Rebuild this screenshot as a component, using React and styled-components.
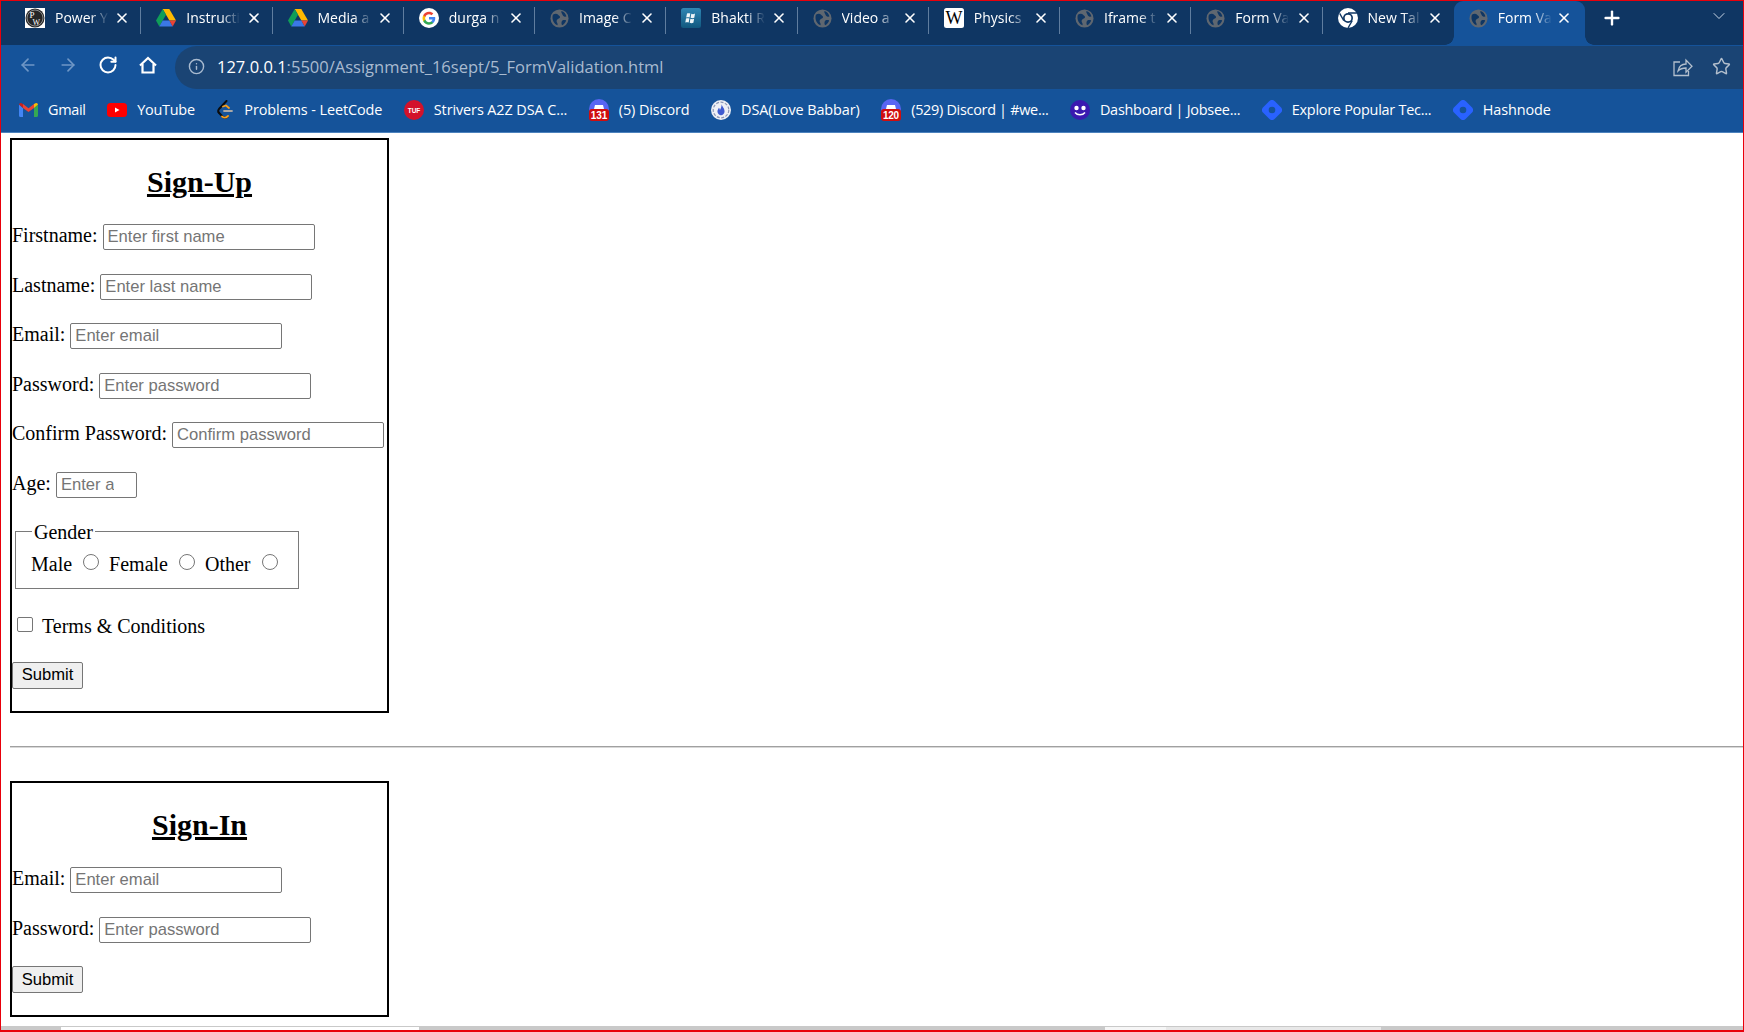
import React from "react";
import styled, { createGlobalStyle } from "styled-components";
import { X, Plus, ChevronDown, ArrowLeft, ArrowRight, RotateCw, Info, Star } from "lucide-react";

const GlobalStyle = createGlobalStyle`
  html, body {
    margin: 0;
    padding: 0;
    background: #fff;
  }
  #root {
    height: 1032px;
  }
`;

const Frame = styled.div`
  box-sizing: border-box;
  width: 1744px;
  height: 1032px;
  display: flex;
  flex-direction: column;
  border: 1px solid #e8000b;
  border-bottom-width: 2px;
  overflow: hidden;
`;

const TabStrip = styled.div`
  height: 44px;
  background: #0f3663;
  display: flex;
  padding-left: 9px;
  font-family: "Open Sans", "Noto Sans", sans-serif;
  flex: none;
`;

const Tab = styled.div`
  position: relative;
  box-sizing: border-box;
  width: 131.25px;
  height: 44px;
  display: flex;
  align-items: center;
  padding: 0 ${(p) => (p.$active ? 13 : 11)}px 10px 15px;
  color: #fff;
  font-size: 14px;
  background: ${(p) => (p.$active ? "#15539a" : "transparent")};
  border-radius: ${(p) => (p.$active ? "9px 9px 0 0" : "0")};

  &::after {
    content: "";
    display: ${(p) => (p.$sep ? "block" : "none")};
    position: absolute;
    right: 0;
    top: 6px;
    height: 27px;
    width: 1px;
    background: #5f7d9f;
  }
`;

// concave corners either side of the selected tab
const TabCorner = styled.span`
  position: absolute;
  bottom: 0;
  width: 9px;
  height: 9px;
  ${(p) => (p.$right ? "right: -9px;" : "left: -9px;")}
  background: radial-gradient(
    circle at ${(p) => (p.$right ? "100% 0" : "0 0")},
    #0f3663 8.5px,
    #15539a 9px
  );
`;

const TabTitle = styled.span`
  width: 54px;
  margin: -2px 0 0 10px;
  white-space: nowrap;
  overflow: hidden;
  -webkit-mask-image: linear-gradient(90deg, #000 65%, transparent 100%);
  mask-image: linear-gradient(90deg, #000 65%, transparent 100%);
`;

const TabClose = styled(X)`
  margin-left: auto;
  flex: none;
`;

const NewTab = styled.div`
  display: flex;
  align-items: center;
  color: #fff;
  padding: 0 0 10px 16px;
`;

const TabMenu = styled.div`
  margin-left: auto;
  padding: 0 14px 14px 0;
  display: flex;
  align-items: center;
  color: #c9d6e6;
`;

const Toolbar = styled.div`
  height: 44px;
  background: #15539a;
  display: flex;
  align-items: flex-start;
  padding-left: 17px;
  flex: none;
`;

const NavIcons = styled.div`
  display: flex;
  gap: 20px;
  padding-top: 10px;
  width: 157px;
  flex: none;
`;

const NavIcon = styled.span`
  display: flex;
  color: ${(p) => (p.$off ? "#6f97c6" : "#fff")};
`;

const Omnibox = styled.div`
  flex: 1;
  box-sizing: border-box;
  height: 43px;
  margin-top: 1px;
  background: #1a4474;
  border-radius: 22px 0 0 22px;
  display: flex;
  align-items: center;
  padding: 0 0 2px 13px;
  font-family: "Open Sans", "Noto Sans", sans-serif;
  font-size: 16.5px;
  color: #a9bbd0;
`;

const Url = styled.span`
  margin-left: 12px;
  white-space: nowrap;

  b {
    font-weight: 400;
    color: #fff;
  }
`;

const OmniActions = styled.div`
  margin-left: auto;
  display: flex;
  gap: 19px;
  padding-right: 12px;
  color: #b3bfcd;
`;

const Bookmarks = styled.div`
  height: 44px;
  background: #15539a;
  border-bottom: 1px solid #4c82bd;
  box-sizing: border-box;
  display: flex;
  align-items: center;
  padding: 0 0 2px 18px;
  font-family: "Open Sans", "Noto Sans", sans-serif;
  font-size: 14.45px;
  color: #fff;
  flex: none;
`;

const Bookmark = styled.div`
  display: flex;
  align-items: center;
  gap: 10px;
  margin-right: 21.5px;
  white-space: nowrap;
  letter-spacing: ${(p) => p.$track || -0.1}px;
`;

const Page = styled.div`
  flex: 1;
  min-height: 0;
  display: flex;
  flex-direction: column;
  padding: 5px 0 0 9px;
  font-family: "Liberation Serif", serif;
  font-size: 20px;
  color: #000;
`;

const FormBox = styled.form`
  box-sizing: border-box;
  width: 379px;
  height: ${(p) => p.$height}px;
  border: 2px solid #000;
  flex: none;
`;

const Heading = styled.h2`
  margin: 25px 0 25px;
  text-align: center;
  font-size: 30px;
  line-height: 34px;
  font-weight: 700;
  text-decoration: underline;
`;

const Row = styled.div`
  height: 49.6px;
  white-space: nowrap;
`;

const Field = styled.input`
  box-sizing: border-box;
  width: ${(p) => p.$width || 212}px;
  height: 26px;
  margin: 0;
  padding: 0 ${(p) => p.$clip || 4}px 0 4px;
  border: 1px solid #767676;
  border-radius: 2px;
  font-family: "Liberation Sans", sans-serif;
  font-size: 16.6px;
  vertical-align: baseline;

  &::placeholder {
    color: #757575;
    opacity: 1;
  }
`;

const GenderSet = styled.fieldset`
  box-sizing: border-box;
  width: 284px;
  height: 68px;
  margin: -1px 0 0 3px;
  padding: 0 0 0 15px;
  border: 1.5px solid #7a7a7a;
  line-height: 22px;

  legend {
    padding: 0 2px;
    margin-left: 1px;
  }
`;

const GenderRow = styled.div`
  display: flex;
  align-items: center;
  height: 30px;
  margin-top: 6px;
`;

const Radio = styled.input.attrs({ type: "radio" })`
  appearance: none;
  box-sizing: border-box;
  width: 16px;
  height: 16px;
  border: 1px solid #767676;
  border-radius: 50%;
  margin: -3px 10px 0 11px;
  flex: none;
`;

const TermsRow = styled.div`
  display: flex;
  align-items: center;
  height: 40px;
  margin: 18px 0 15px 5px;
`;

const Check = styled.input.attrs({ type: "checkbox" })`
  appearance: none;
  box-sizing: border-box;
  width: 16px;
  height: 15px;
  border: 1px solid #767676;
  border-radius: 2px;
  margin: -4px 9px 0 0;
  flex: none;
`;

const SubmitButton = styled.button`
  box-sizing: border-box;
  display: block;
  width: 71px;
  height: 27px;
  padding: 0;
  background: #efefef;
  border: 1px solid #767676;
  border-radius: 2px;
  color: #000;
  font-family: "Liberation Sans", sans-serif;
  font-size: 16.6px;
`;

const Rule = styled.hr`
  width: 100%;
  margin: 33px 0 33px;
  border: none;
  border-top: 1px solid #a0a0a0;
  border-bottom: 1px solid #d8d8d8;
  flex: none;
`;

const ScrollBar = styled.div`
  height: 4px;
  flex: none;
  margin-top: auto;
  margin-left: -9px;
  display: flex;
  background: #c9c9c9;
`;

const ScrollPart = styled.div`
  box-sizing: border-box;
  width: ${(p) => p.$w}px;
  flex: none;
  background: ${(p) => p.$bg};
  border-top: 1px solid #c9c9c9;
`;

const Globe = () => (
  <svg width="19" height="19" viewBox="0 0 20 20">
    <circle cx="10" cy="10" r="9.500" fill="#5f6770" />
    <path d="M3 6c2.500-1.500 4.500-1 5.500 0s2.500 1.500 2 3-3 1.200-3.500 3 1.500 2.500 1 5C4.500 16.200 1.500 11 3 6zM12 2.200c2.800.8 4.800 3 5.300 5.800-1.800.5-3.500-.5-4-1.800S11.500 4 12 2.200zM13 12c1.300-.6 3-.6 4 0-.6 2.300-2.300 4-4.200 5-1-1.300-1-3.700.2-5z" fill="#0f3663" />
  </svg>
);

const PwIcon = () => (
  <svg width="20" height="20" viewBox="0 0 20 20">
    <rect width="20" height="20" fill="#fff" />
    <circle cx="10" cy="10" r="9.500" fill="#262626" />
    <circle cx="10" cy="10" r="8" fill="none" stroke="#d0d0d0" strokeWidth="0.600" />
    <text x="4.500" y="10" fill="#fff" fontSize="9" fontFamily="Liberation Serif">P</text>
    <text x="7.500" y="16.500" fill="#fff" fontSize="8" fontFamily="Liberation Serif">W</text>
  </svg>
);

const DriveIcon = () => (
  <svg width="20" height="18" viewBox="0 0 20 18">
    <path d="M6.700 0h6.600l6.700 11.500h-6.600z" fill="#ffba00" />
    <path d="M6.700 0l3.300 5.800L3.300 17.500 0 11.500z" fill="#109d58" />
    <path d="M6.700 11.500h6.700l3.300 6H3.300z" fill="#3b78e7" />
    <path d="M16.700 17.500l-3.300-6H20z" fill="#ea4335" />
  </svg>
);

const GoogleIcon = () => (
  <svg width="20" height="20" viewBox="0 0 48 48">
    <circle cx="24" cy="24" r="24" fill="#fff" />
    <path d="M39 24.500c0-1-.1-2-.3-3H24v5.800h8.400c-.4 2-1.500 3.600-3.100 4.700v3.800h5c3-2.700 4.700-6.700 4.700-11.300z" fill="#4285f4" />
    <path d="M24 40c4.200 0 7.700-1.400 10.300-3.800l-5-3.800c-1.400.9-3.200 1.500-5.300 1.500-4 0-7.500-2.700-8.700-6.400h-5.200v4C12.700 36.600 18 40 24 40z" fill="#34a853" />
    <path d="M15.300 27.500c-.3-.9-.5-2-.5-3s.2-2.100.5-3v-4h-5.200C9.100 19.600 8.500 22 8.500 24.500s.6 4.900 1.600 7z" fill="#fbbc05" />
    <path d="M24 15c2.300 0 4.300.8 5.900 2.300l4.400-4.400C31.700 10.400 28.200 9 24 9c-6 0-11.300 3.400-13.900 8.500l5.200 4C16.500 17.700 20 15 24 15z" fill="#ea4335" />
  </svg>
);

const WindowsIcon = () => (
  <svg width="20" height="20" viewBox="0 0 20 20">
    <defs>
      <linearGradient id="tile" x1="0" y1="0" x2="0" y2="1">
        <stop offset="0" stopColor="#2f86b4" />
        <stop offset="1" stopColor="#11587f" />
      </linearGradient>
    </defs>
    <rect width="20" height="20" rx="2.500" fill="url(#tile)" />
    <path d="M6 5.500c1.200-.5 2.200-.5 3.300 0l-.7 4c-1.100-.5-2.200-.5-3.400 0zM10.300 5.800c1.200.5 2.400.5 3.700-.2l-.7 4.100c-1.300.6-2.500.6-3.700.1zM5 10.500c1.200-.5 2.300-.5 3.400 0l-.7 4c-1.100-.5-2.200-.5-3.400 0zM9.400 10.800c1.200.5 2.400.5 3.700-.1l-.7 4c-1.300.6-2.500.6-3.700.1z" fill="#eef5f8" />
  </svg>
);

const WikiIcon = () => (
  <svg width="20" height="20" viewBox="0 0 20 20">
    <rect width="20" height="20" rx="2.500" fill="#fff" />
    <text x="10" y="15.500" textAnchor="middle" fontSize="18" fontFamily="Liberation Serif" fill="#000">W</text>
  </svg>
);

const ChromeIcon = () => (
  <svg width="20" height="20" viewBox="0 0 18 18">
    <circle cx="9" cy="9" r="9" fill="#fff" />
    <circle cx="9" cy="9" r="4.500" fill="#0f3663" />
    <circle cx="9" cy="9" r="3" fill="#fff" />
    <path d="M9 4.500h8M5.200 11.300L1.500 4.800M12.800 11.300L9 18" stroke="#0f3663" strokeWidth="1.200" />
  </svg>
);

const GmailIcon = () => (
  <svg width="19" height="14" viewBox="0 0 19 14">
    <path d="M0 1.500v11A1.500 1.500 0 0 0 1.500 14H4V5z" fill="#4285f4" />
    <path d="M15 14h2.500a1.500 1.500 0 0 0 1.500-1.500v-11L15 5z" fill="#34a853" />
    <path d="M15 1v4l4-3.500C19 .5 17.500-.5 16.500.3z" fill="#fbbc05" />
    <path d="M4 5V1L9.500 5.200 15 1v4L9.500 9z" fill="#ea4335" />
    <path d="M0 1.500C0 .5 1.500-.5 2.500.3L4 1v4z" fill="#c5221f" />
  </svg>
);

const YouTubeIcon = () => (
  <svg width="20" height="14" viewBox="0 0 20 14">
    <rect width="20" height="14" rx="3.500" fill="#f00" />
    <path d="M8 4.500l4.500 2.500L8 9.500z" fill="#fff" />
  </svg>
);

const LeetCodeIcon = () => (
  <svg width="18" height="20" viewBox="0 0 18 20" fill="none">
    <path d="M10.500 1L3 9c-1 1.300-1 2.500-.3 3.500" stroke="#0c0c0c" strokeWidth="2" strokeLinecap="round" />
    <path d="M2.700 12.500l3.800 4c1.500 1.500 3.500 1.500 5 .2" stroke="#0c0c0c" strokeWidth="2" strokeLinecap="round" />
    <path d="M7 6.500l3-1 3 2.500" stroke="#f89f1b" strokeWidth="1.800" strokeLinecap="round" />
    <path d="M6 16.500c2 1.500 4.500 1 6-.5" stroke="#f89f1b" strokeWidth="1.800" strokeLinecap="round" />
    <path d="M8 11h8" stroke="#a8a8a8" strokeWidth="1.800" strokeLinecap="round" />
  </svg>
);

const TufIcon = () => (
  <svg width="20" height="20" viewBox="0 0 20 20">
    <circle cx="10" cy="10" r="10" fill="#d3122b" />
    <text x="10" y="12.500" textAnchor="middle" fontSize="6.500" fontWeight="700" fontFamily="Liberation Sans" fill="#fff">TUF</text>
  </svg>
);

const DiscordIcon = ({ count }) => (
  <svg width="20" height="22" viewBox="0 0 20 22">
    <circle cx="10" cy="10" r="10" fill="#5865f2" />
    <path d="M6 6h8l1 4H5z" fill="#fff" />
    <rect x="0" y="10" width="20" height="12" rx="3" fill="#d00e0e" />
    <text x="10" y="19.500" textAnchor="middle" fontSize="10" fontWeight="700" fontFamily="Liberation Sans" fill="#fff">{count}</text>
  </svg>
);

const LoveBabbarIcon = () => (
  <svg width="20" height="20" viewBox="0 0 20 20">
    <circle cx="10" cy="10" r="10" fill="#eef0f6" />
    <circle cx="10" cy="10" r="7.800" fill="none" stroke="#8d97b5" strokeWidth="1.200" strokeDasharray="3 1.500" />
    <path d="M10.500 4c.5 2.500 3.500 4.500 3 8-.3 2-1.800 3.200-3.500 3.200S6.800 14 6.500 12c-.3-1.800.8-3 1.400-4.300.6.700 1 1.300 1 2.300 1-1.800 1.900-3.500 1.600-6z" fill="#3f5bd0" />
  </svg>
);

const JobseeIcon = () => (
  <svg width="20" height="20" viewBox="0 0 20 20">
    <circle cx="10" cy="10" r="10" fill="#3a1ab0" />
    <circle cx="6.500" cy="8" r="2.200" fill="#fff" />
    <circle cx="13.500" cy="8" r="2.200" fill="#fff" />
    <path d="M5 12.500c2.500 3 7.500 3 10 0" stroke="#fff" strokeWidth="1.500" fill="none" />
  </svg>
);

const HashnodeIcon = () => (
  <svg width="20" height="20" viewBox="0 0 20 20">
    <path d="M7.200 1.200a4 4 0 0 1 5.600 0l6 6a4 4 0 0 1 0 5.600l-6 6a4 4 0 0 1-5.600 0l-6-6a4 4 0 0 1 0-5.600z" fill="#2962ff" />
    <circle cx="10" cy="10" r="3.300" fill="#15539a" />
  </svg>
);

const HomeIcon = () => (
  <svg width="20" height="20" viewBox="0 0 20 20" fill="none" stroke="currentColor" strokeWidth="2.200">
    <path d="M2 10.500L10 3l8 7.500" />
    <path d="M4.500 9v8.500h11V9" />
  </svg>
);

const ShareIcon = () => (
  <svg width="21" height="20" viewBox="0 0 21 20" fill="none" stroke="currentColor" strokeWidth="1.300">
    <path d="M8 5H2v13.500h14.500V14" />
    <path d="M6 14c.8-4.500 4-7 8-7V3l6 6.300-6 6V11c-3.500 0-6 1-8 3z" />
  </svg>
);

const tabs = [
  { title: "Power Y", icon: <PwIcon /> },
  { title: "Instructi", icon: <DriveIcon /> },
  { title: "Media a", icon: <DriveIcon /> },
  { title: "durga n", icon: <GoogleIcon /> },
  { title: "Image C", icon: <Globe /> },
  { title: "Bhakti R", icon: <WindowsIcon /> },
  { title: "Video a", icon: <Globe /> },
  { title: "Physics", icon: <WikiIcon /> },
  { title: "Iframe t", icon: <Globe /> },
  { title: "Form Va", icon: <Globe /> },
  { title: "New Tal", icon: <ChromeIcon /> },
  { title: "Form Va", icon: <Globe />, active: true },
];

const bookmarks = [
  { title: "Gmail", icon: <GmailIcon />, track: -0.3 },
  { title: "YouTube", icon: <YouTubeIcon />, track: -0.25 },
  { title: "Problems - LeetCode", icon: <LeetCodeIcon /> },
  { title: "Strivers A2Z DSA C...", icon: <TufIcon /> },
  { title: "(5) Discord", icon: <DiscordIcon count="131" /> },
  { title: "DSA(Love Babbar)", icon: <LoveBabbarIcon /> },
  { title: "(529) Discord | #we...", icon: <DiscordIcon count="120" />, track: -0.3 },
  { title: "Dashboard | Jobsee...", icon: <JobseeIcon />, track: -0.26 },
  { title: "Explore Popular Tec...", icon: <HashnodeIcon />, track: -0.26 },
  { title: "Hashnode", icon: <HashnodeIcon /> },
];

const SignUp = () => (
  <FormBox $height={575}>
    <Heading>Sign-Up</Heading>
    <Row>Firstname: <Field placeholder="Enter first name" /></Row>
    <Row>Lastname: <Field placeholder="Enter last name" /></Row>
    <Row>Email: <Field placeholder="Enter email" /></Row>
    <Row>Password: <Field placeholder="Enter password" /></Row>
    <Row>Confirm Password: <Field placeholder="Confirm password" /></Row>
    <Row>Age: <Field $width={81} $clip={22} placeholder="Enter age" /></Row>
    <GenderSet>
      <legend>Gender</legend>
      <GenderRow>
        Male <Radio name="gender" /> Female <Radio name="gender" /> Other <Radio name="gender" />
      </GenderRow>
    </GenderSet>
    <TermsRow>
      <Check /> Terms &amp; Conditions
    </TermsRow>
    <SubmitButton type="button">Submit</SubmitButton>
  </FormBox>
);

const SignIn = () => (
  <FormBox $height={236}>
    <Heading>Sign-In</Heading>
    <Row>Email: <Field placeholder="Enter email" /></Row>
    <Row>Password: <Field placeholder="Enter password" /></Row>
    <SubmitButton type="button">Submit</SubmitButton>
  </FormBox>
);

const App = () => (
  <Frame>
    <GlobalStyle />
    <TabStrip>
      {tabs.map((tab, i) => (
        <Tab key={i} $active={tab.active} $sep={i < 10}>
          {tab.active && <TabCorner />}
          {tab.active && <TabCorner $right />}
          {tab.icon}
          <TabTitle>{tab.title}</TabTitle>
          <TabClose size={16} strokeWidth={2.4} />
        </Tab>
      ))}
      <NewTab><Plus size={22} strokeWidth={2.6} /></NewTab>
      <TabMenu><ChevronDown size={20} strokeWidth={1.2} /></TabMenu>
    </TabStrip>
    <Toolbar>
      <NavIcons>
        <NavIcon $off><ArrowLeft size={20} /></NavIcon>
        <NavIcon $off><ArrowRight size={20} /></NavIcon>
        <NavIcon><RotateCw size={20} strokeWidth={2.4} /></NavIcon>
        <NavIcon><HomeIcon /></NavIcon>
      </NavIcons>
      <Omnibox>
        <Info size={17} />
        <Url><b>127.0.0.1</b>:5500/Assignment_16sept/5_FormValidation.html</Url>
        <OmniActions>
          <ShareIcon />
          <Star size={19} strokeWidth={1.8} />
        </OmniActions>
      </Omnibox>
    </Toolbar>
    <Bookmarks>
      {bookmarks.map((b) => (
        <Bookmark key={b.title} $track={b.track}>
          {b.icon}
          {b.title}
        </Bookmark>
      ))}
    </Bookmarks>
    <Page>
      <SignUp />
      <Rule />
      <SignIn />
      <ScrollBar>
        <ScrollPart $w={60} $bg="#c9c9c9" />
        <ScrollPart $w={358} $bg="#fff" />
        <ScrollPart $w={686} $bg="#c9c9c9" />
        <ScrollPart $w={61} $bg="#f6f6f6" />
        <ScrollPart $w={215} $bg="#e8e8e8" />
      </ScrollBar>
    </Page>
  </Frame>
);

export default App;
